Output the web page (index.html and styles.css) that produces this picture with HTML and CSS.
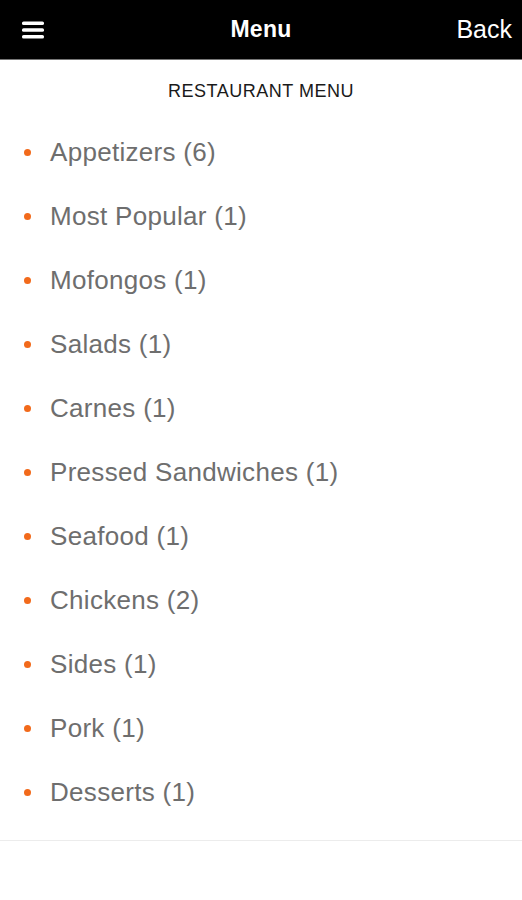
FILE: index.html
```html
<!DOCTYPE html>
<html lang="en">
  <head>
    <meta charset="UTF-8" />
    <meta name="viewport" content="width=device-width, initial-scale=1.0" />
    <title>Menu</title>
    <link rel="stylesheet" href="styles.css">
  </head>
  <body>
    <div class="topbar">
      <span class="menu-icon">
        <svg width="22" height="18" viewBox="0 0 22 18">
          <rect x="0" y="0.5" width="22" height="3.6" rx="1.6" fill="#fff" />
          <rect x="0" y="7.2" width="22" height="3.6" rx="1.6" fill="#fff" />
          <rect x="0" y="13.9" width="22" height="3.6" rx="1.6" fill="#fff" />
        </svg>
      </span>
      <span class="title">Menu</span>
      <span class="back">Back</span>
    </div>

    <div class="card">
      <h2>RESTAURANT MENU</h2>
      <ul class="categories">
        <li>Appetizers (6)</li>
        <li>Most Popular (1)</li>
        <li>Mofongos (1)</li>
        <li>Salads (1)</li>
        <li>Carnes (1)</li>
        <li>Pressed Sandwiches (1)</li>
        <li>Seafood (1)</li>
        <li>Chickens (2)</li>
        <li>Sides (1)</li>
        <li>Pork (1)</li>
        <li>Desserts (1)</li>
      </ul>
    </div>
  </body>
</html>
```

FILE: styles.css
```css
body {
  margin: 0;
  font-family: "Liberation Sans", Arial, sans-serif;
  background: #fff;
}
.topbar {
  height: 60px;
  background: #000;
  color: #fff;
  display: grid;
  grid-template-columns: 1fr auto 1fr;
  align-items: center;
  padding: 0 10px;
  border-bottom: 1px solid #777;
  box-sizing: border-box;
}
.menu-icon {
  display: flex;
  margin-left: 12px;
}
.title {
  font-size: 23px;
  font-weight: bold;
  letter-spacing: 0.3px;
}
.back {
  justify-self: end;
  font-size: 25px;
}
.card {
  background: #fff;
  padding: 21px 0 16px;
  box-shadow: 0 3px 6px rgba(0, 0, 0, 0.07);
  border-bottom: 1px solid #ececec;
}
h2 {
  margin: 0;
  text-align: center;
  font-size: 18px;
  font-weight: normal;
  color: #1a1a1a;
  letter-spacing: 0.5px;
}
.categories {
  list-style: none;
  margin: 0;
  padding: 18px 0 0 24px;
}
.categories li {
  display: flex;
  align-items: center;
  height: 64px;
  font-size: 26px;
  letter-spacing: 0.3px;
  color: #6e6e6e;
}
.categories li::before {
  content: "";
  width: 7px;
  height: 7px;
  border-radius: 50%;
  background: #f26a1b;
  margin-right: 19px;
}
```
